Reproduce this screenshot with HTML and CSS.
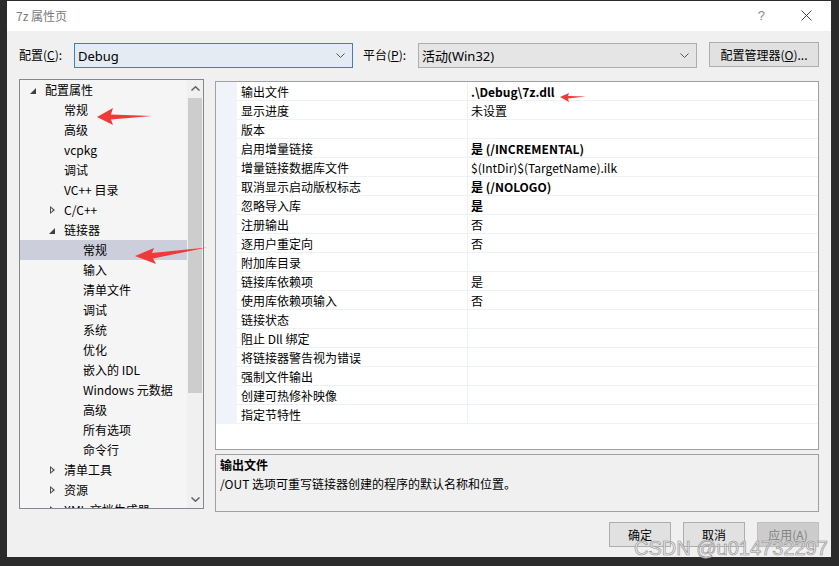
FILE: index.html
```html
<!DOCTYPE html>
<html lang="zh-CN">
<head>
    <meta charset="UTF-8">
    <title>7z 属性页</title>
    <link rel="stylesheet" href="styles.css">
</head>
<body>
    <div class="window">
        <div class="titlebar">
            <span class="title">7z 属性页</span>
            <span class="help">?</span>
            <svg class="close" width="11" height="11" viewBox="0 0 11 11"><path d="M0.5 0.5L10.5 10.5M10.5 0.5L0.5 10.5" stroke="#444" stroke-width="1" fill="none"/></svg>
        </div>

        <div class="content">
            <div class="config-row">
                <label class="lbl">配置(<u>C</u>):</label>
                <div class="combo focused">
                    <span>Debug</span>
                    <svg width="9" height="5" viewBox="0 0 9 5"><path d="M0.5 0.5L4.5 4.5L8.5 0.5" stroke="#555" fill="none"/></svg>
                </div>
                <label class="lbl platform">平台(<u>P</u>):</label>
                <div class="combo">
                    <span>活动(Win32)</span>
                    <svg width="9" height="5" viewBox="0 0 9 5"><path d="M0.5 0.5L4.5 4.5L8.5 0.5" stroke="#555" fill="none"/></svg>
                </div>
                <button class="btn manager">配置管理器(<u>O</u>)...</button>
            </div>

            <div class="main">
                <div class="tree">
                    <div class="tree-list">
                        <div class="node l0"><span class="tw open"></span>配置属性</div>
                        <div class="node l1"><span class="tw"></span>常规</div>
                        <div class="node l1"><span class="tw"></span>高级</div>
                        <div class="node l1"><span class="tw"></span>vcpkg</div>
                        <div class="node l1"><span class="tw"></span>调试</div>
                        <div class="node l1"><span class="tw"></span>VC++ 目录</div>
                        <div class="node l1"><span class="tw closed"></span>C/C++</div>
                        <div class="node l1"><span class="tw open"></span>链接器</div>
                        <div class="node l2 selected"><span class="tw"></span>常规</div>
                        <div class="node l2"><span class="tw"></span>输入</div>
                        <div class="node l2"><span class="tw"></span>清单文件</div>
                        <div class="node l2"><span class="tw"></span>调试</div>
                        <div class="node l2"><span class="tw"></span>系统</div>
                        <div class="node l2"><span class="tw"></span>优化</div>
                        <div class="node l2"><span class="tw"></span>嵌入的 IDL</div>
                        <div class="node l2"><span class="tw"></span>Windows 元数据</div>
                        <div class="node l2"><span class="tw"></span>高级</div>
                        <div class="node l2"><span class="tw"></span>所有选项</div>
                        <div class="node l2"><span class="tw"></span>命令行</div>
                        <div class="node l1"><span class="tw closed"></span>清单工具</div>
                        <div class="node l1"><span class="tw closed"></span>资源</div>
                        <div class="node l1"><span class="tw closed"></span>XML 文档生成器</div>
                    </div>
                    <div class="scrollbar">
                        <div class="sb-arrow">
                            <svg width="9" height="5" viewBox="0 0 9 5"><path d="M0.5 4.5L4.5 0.8L8.5 4.5" stroke="#606060" stroke-width="1.5" fill="none"/></svg>
                        </div>
                        <div class="sb-track">
                            <div class="sb-thumb"></div>
                        </div>
                        <div class="sb-arrow">
                            <svg width="9" height="5" viewBox="0 0 9 5"><path d="M0.5 0.5L4.5 4.2L8.5 0.5" stroke="#606060" stroke-width="1.5" fill="none"/></svg>
                        </div>
                    </div>
                </div>

                <div class="right">
                    <div class="grid">
                        <div class="row"><div class="gut"></div><div class="name">输出文件</div><div class="val bold">.\Debug\7z.dll</div></div>
                        <div class="row"><div class="gut"></div><div class="name">显示进度</div><div class="val">未设置</div></div>
                        <div class="row"><div class="gut"></div><div class="name">版本</div><div class="val"></div></div>
                        <div class="row"><div class="gut"></div><div class="name">启用增量链接</div><div class="val bold">是 (/INCREMENTAL)</div></div>
                        <div class="row"><div class="gut"></div><div class="name">增量链接数据库文件</div><div class="val">$(IntDir)$(TargetName).ilk</div></div>
                        <div class="row"><div class="gut"></div><div class="name">取消显示启动版权标志</div><div class="val bold">是 (/NOLOGO)</div></div>
                        <div class="row"><div class="gut"></div><div class="name">忽略导入库</div><div class="val bold">是</div></div>
                        <div class="row"><div class="gut"></div><div class="name">注册输出</div><div class="val">否</div></div>
                        <div class="row"><div class="gut"></div><div class="name">逐用户重定向</div><div class="val">否</div></div>
                        <div class="row"><div class="gut"></div><div class="name">附加库目录</div><div class="val"></div></div>
                        <div class="row"><div class="gut"></div><div class="name">链接库依赖项</div><div class="val">是</div></div>
                        <div class="row"><div class="gut"></div><div class="name">使用库依赖项输入</div><div class="val">否</div></div>
                        <div class="row"><div class="gut"></div><div class="name">链接状态</div><div class="val"></div></div>
                        <div class="row"><div class="gut"></div><div class="name">阻止 Dll 绑定</div><div class="val"></div></div>
                        <div class="row"><div class="gut"></div><div class="name">将链接器警告视为错误</div><div class="val"></div></div>
                        <div class="row"><div class="gut"></div><div class="name">强制文件输出</div><div class="val"></div></div>
                        <div class="row"><div class="gut"></div><div class="name">创建可热修补映像</div><div class="val"></div></div>
                        <div class="row"><div class="gut"></div><div class="name">指定节特性</div><div class="val"></div></div>
                    </div>
                    <div class="desc">
                        <div class="desc-title">输出文件</div>
                        <div>/OUT 选项可重写链接器创建的程序的默认名称和位置。</div>
                    </div>
                </div>
            </div>

            <div class="buttons">
                <button class="btn">确定</button>
                <button class="btn">取消</button>
                <button class="btn disabled">应用(<u>A</u>)</button>
            </div>
        </div>
    </div>

    <!-- screenshot annotations -->
    <svg class="marks" width="839" height="566" viewBox="0 0 839 566">
        <polygon points="97,117 113,108 111,114.5 152,116 111,119.5 113,125" fill="#f03a3a"/>
        <polygon points="135,256 154,248 152,253 207,247.5 153,258.5 156,264" fill="#f03a3a"/>
        <polygon points="560,97 569,93 568,96 586,96.5 568,98.5 569,102" fill="#f03a3a"/>
    </svg>
    <div class="watermark">CSDN @u014732297</div>
</body>
</html>
```

FILE: styles.css
```css
* {
    margin: 0;
    padding: 0;
    box-sizing: border-box;
}

body {
    background: #2b2b2b;
    font-family: "Noto Sans CJK SC", sans-serif;
    font-size: 12px;
    color: #000;
    width: 839px;
    height: 566px;
    overflow: hidden;
    position: relative;
    padding: 1px 8px 9px 7px;
}

.window {
    width: 824px;
    height: 556px;
    background: #f0f0f0;
    display: flex;
    flex-direction: column;
}

.titlebar {
    height: 30px;
    background: #fff;
    display: flex;
    align-items: center;
    padding: 0 0 2px 9px;
    flex-shrink: 0;
}

.title {
    color: #7a7a7a;
    flex-grow: 1;
}

.help {
    color: #8a8a8a;
    font-family: "Liberation Sans", sans-serif;
    font-size: 13px;
    margin-right: 36px;
}

.close {
    margin-right: 19px;
}

.content {
    padding: 11px 12px 11px 12px;
    flex-grow: 1;
    display: flex;
    flex-direction: column;
}

.config-row {
    display: flex;
    align-items: center;
    height: 26px;
}

.lbl {
    width: 55px;
    line-height: 16px;
}

.lbl.platform {
    margin-left: 10px;
}

.combo {
    width: 279px;
    height: 25px;
    margin-top: 1px;
    border: 1px solid #adadad;
    background: #e5e5e5;
    display: flex;
    align-items: center;
    justify-content: space-between;
    padding: 0 7px 0 3px;
}

.combo.focused {
    border-color: #3d7fc1;
    background: #e4ebf3;
}

.combo span {
    font-family: "Noto Sans", "Noto Sans CJK SC", sans-serif;
    font-size: 13px;
    line-height: 16px;
}

.btn {
    font-family: "Noto Sans CJK SC", sans-serif;
    font-size: 12px;
    background: #e1e1e1;
    border: 1px solid #adadad;
    color: #000;
    height: 25px;
    width: 62px;
}

.btn.manager {
    width: 110px;
    margin-left: 12px;
    margin-top: -1px;
}

.btn.disabled {
    background: #cccccc;
    border-color: #bfbfbf;
    color: #838383;
}

.main {
    margin-top: 11px;
    display: grid;
    grid-template-columns: 185px 1fr;
    column-gap: 11px;
    align-items: start;
}

.tree {
    height: 430px;
    border: 1px solid #828790;
    background: #f5f5f5;
    display: flex;
}

.tree-list {
    flex-grow: 1;
    overflow: hidden;
}

.node {
    height: 20px;
    line-height: 20px;
    white-space: nowrap;
    display: flex;
    align-items: center;
}

.node.l0 { padding-left: 10px; }
.node.l1 { padding-left: 29px; }
.node.l2 { padding-left: 48px; }

.node.selected {
    background: #cccedb;
}

.tw {
    width: 15px;
    height: 20px;
    flex-shrink: 0;
    position: relative;
}

.tw.open::before {
    content: "";
    position: absolute;
    left: 0;
    top: 8px;
    border-style: solid;
    border-width: 0 0 6px 6px;
    border-color: transparent transparent #404040 transparent;
}

.tw.closed::before {
    content: "";
    position: absolute;
    left: 1px;
    top: 6px;
    width: 0;
    height: 0;
    border-style: solid;
    border-width: 4px 0 4px 5px;
    border-color: transparent transparent transparent #505050;
}

.tw.closed::after {
    content: "";
    position: absolute;
    left: 2px;
    top: 8px;
    width: 0;
    height: 0;
    border-style: solid;
    border-width: 2px 0 2px 2.5px;
    border-color: transparent transparent transparent #f5f5f5;
}

.scrollbar {
    width: 16px;
    background: #f0f0f0;
    display: flex;
    flex-direction: column;
    flex-shrink: 0;
}

.sb-arrow {
    height: 17px;
    display: flex;
    align-items: center;
    justify-content: center;
}

.sb-track {
    flex-grow: 1;
    padding: 1px 0;
}

.sb-thumb {
    height: 295px;
    margin: 0 1px;
    background: #cdcdcd;
}

.right {
    display: flex;
    flex-direction: column;
    gap: 4px;
    padding-top: 2px;
}

.grid {
    height: 369px;
    border: 1px solid #a0a0a0;
    background: #fff;
}

.row {
    display: flex;
    height: 19px;
}

.gut {
    width: 21px;
    background: #f0f4fa;
}

.name,
.val {
    border-bottom: 1px solid #eef1f6;
    line-height: 18px;
    padding-top: 1px;
    white-space: nowrap;
}

.name {
    width: 231px;
    padding-left: 4px;
    border-right: 1px solid #eef1f6;
}

.val {
    flex-grow: 1;
    padding-left: 3px;
}

.bold {
    font-weight: bold;
}

.desc {
    height: 58px;
    border: 1px solid #a0a0a0;
    background: #f0f0f0;
    padding: 0 4px;
    line-height: 19px;
}

.desc-title {
    font-weight: bold;
}

.buttons {
    margin-top: 10px;
    display: flex;
    justify-content: flex-end;
    gap: 12px;
}

.marks {
    position: absolute;
    left: 0;
    top: 0;
    pointer-events: none;
}

.watermark {
    position: absolute;
    left: 634px;
    top: 536px;
    white-space: nowrap;
    font-family: "Liberation Sans", sans-serif;
    font-size: 20px;
    line-height: 24px;
    color: rgba(238, 238, 238, 0.85);
    -webkit-text-stroke: 0.6px #8c8c8c;
}
```
